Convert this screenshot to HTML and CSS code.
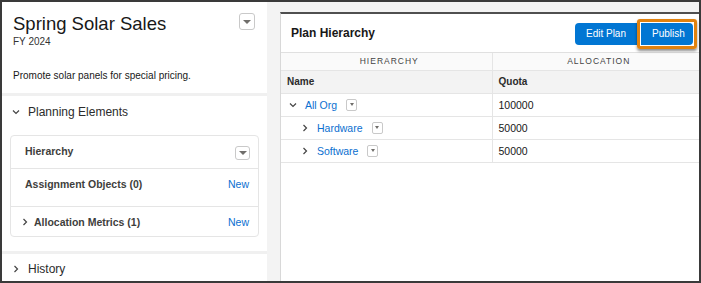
FILE: index.html
```html
<!DOCTYPE html>
<html lang="en">
<head>
    <meta charset="UTF-8">
    <title>Spring Solar Sales</title>
    <link rel="stylesheet" href="styles.css">
</head>
<body>
    <div class="frame">
        <aside class="plan-panel">
            <div class="plan-head">
                <div>
                    <h1>Spring Solar Sales</h1>
                    <div class="plan-year">FY 2024</div>
                </div>
                <button class="menu-btn"><span class="caret"></span></button>
            </div>
            <p class="plan-desc">Promote solar panels for special pricing.</p>

            <section class="section">
                <div class="section-title">
                    <svg class="chev" width="8" height="8" viewBox="0 0 8 8"><polyline points="1,2.5 4,5.5 7,2.5" /></svg>
                    Planning Elements
                </div>
                <div class="elements">
                    <div class="element-row row-hier">
                        <span>Hierarchy</span>
                        <button class="menu-btn small"><span class="caret"></span></button>
                    </div>
                    <div class="element-row row-assign">
                        <span>Assignment Objects (0)</span>
                        <a class="link">New</a>
                    </div>
                    <div class="element-row row-alloc">
                        <span class="with-chev">
                            <svg class="chev" width="8" height="8" viewBox="0 0 8 8"><polyline points="2.5,1 5.5,4 2.5,7" /></svg>
                            Allocation Metrics (1)
                        </span>
                        <a class="link">New</a>
                    </div>
                </div>
            </section>

            <section class="section history">
                <div class="section-title">
                    <svg class="chev" width="8" height="8" viewBox="0 0 8 8"><polyline points="2.5,1 5.5,4 2.5,7" /></svg>
                    History
                </div>
            </section>
        </aside>

        <main class="main-area">
            <div class="card">
                <div class="card-head">
                    <h2>Plan Hierarchy</h2>
                    <div class="btn-group">
                        <button class="btn">Edit Plan</button>
                        <span class="highlight"><button class="btn">Publish</button></span>
                    </div>
                </div>
                <table class="grid">
                    <tr class="group-row">
                        <th class="col-name">Hierarchy</th>
                        <th>Allocation</th>
                    </tr>
                    <tr class="head-row">
                        <th class="col-name">Name</th>
                        <th>Quota</th>
                    </tr>
                    <tr>
                        <td class="col-name">
                            <span class="node lvl0">
                                <svg class="chev" width="8" height="8" viewBox="0 0 8 8"><polyline points="1,2.5 4,5.5 7,2.5" /></svg>
                                <a class="link">All Org</a>
                                <button class="menu-btn tiny"><span class="caret"></span></button>
                            </span>
                        </td>
                        <td>100000</td>
                    </tr>
                    <tr>
                        <td class="col-name">
                            <span class="node lvl1">
                                <svg class="chev" width="8" height="8" viewBox="0 0 8 8"><polyline points="2.5,1 5.5,4 2.5,7" /></svg>
                                <a class="link">Hardware</a>
                                <button class="menu-btn tiny"><span class="caret"></span></button>
                            </span>
                        </td>
                        <td>50000</td>
                    </tr>
                    <tr>
                        <td class="col-name">
                            <span class="node lvl1">
                                <svg class="chev" width="8" height="8" viewBox="0 0 8 8"><polyline points="2.5,1 5.5,4 2.5,7" /></svg>
                                <a class="link">Software</a>
                                <button class="menu-btn tiny"><span class="caret"></span></button>
                            </span>
                        </td>
                        <td>50000</td>
                    </tr>
                </table>
            </div>
        </main>
    </div>
</body>
</html>
```

FILE: styles.css
```css
* {
    box-sizing: border-box;
}

body {
    margin: 0;
    font-family: "Liberation Sans", Arial, sans-serif;
    color: #181818;
}

.frame {
    width: 701px;
    height: 283px;
    display: flex;
    border: 2px solid #3a3a3a;
    background: #f3f3f3;
    overflow: hidden;
}

/* left panel */

.plan-panel {
    width: 265px;
    flex-shrink: 0;
    background: white;
}

.plan-head {
    display: flex;
    justify-content: space-between;
    align-items: flex-start;
    padding: 11px 12px 0 11px;
}

.plan-head h1 {
    margin: 0;
    font-size: 18.5px;
    font-weight: normal;
    line-height: 22px;
}

.plan-year {
    font-size: 10px;
    line-height: 14px;
    color: #333;
}

.plan-desc {
    margin: 0;
    padding: 20px 11px 10px;
    font-size: 10px;
    line-height: 14px;
}

.section {
    border-top: 3px solid #f0f0f0;
    padding: 0 8px 14px 8px;
}

.section-title {
    display: flex;
    align-items: center;
    gap: 8px;
    height: 30px;
    padding: 1px 0 0 2px;
    font-size: 12px;
    color: #2b2b2b;
}

.chev {
    fill: none;
    stroke: #444;
    stroke-width: 1.2;
    flex-shrink: 0;
}

.elements {
    margin-top: 9px;
    border: 1px solid #e5e5e5;
    border-radius: 4px;
}

.element-row {
    display: flex;
    justify-content: space-between;
    font-size: 10.5px;
    font-weight: bold;
    color: #3e3e3c;
    padding: 0 9px 0 14px;
    border-bottom: 1px solid #e5e5e5;
}

.element-row:last-child {
    border-bottom: none;
}

.row-hier {
    height: 33px;
    padding-top: 9px;
    padding-right: 8px;
}

.row-hier .menu-btn {
    margin-top: 1px;
}

.row-assign {
    height: 38px;
    padding-top: 9px;
}

.row-alloc {
    height: 29px;
    align-items: center;
    padding-left: 10px;
}

.with-chev {
    display: flex;
    align-items: center;
    gap: 5px;
}

.link {
    color: #0b6fd0;
    font-weight: normal;
    text-decoration: none;
}

.history {
    padding-top: 0;
}

.history .section-title {
    height: 29px;
}

.menu-btn {
    width: 16px;
    height: 17px;
    padding: 0;
    border: 1px solid #c9c9c9;
    border-radius: 3px;
    background: white;
    display: flex;
    align-items: center;
    justify-content: center;
}

.menu-btn.small {
    width: 15px;
    height: 14px;
}

.menu-btn.tiny {
    width: 11px;
    height: 12px;
    border-radius: 2px;
}

.caret {
    width: 0;
    height: 0;
    border-left: 4px solid transparent;
    border-right: 4px solid transparent;
    border-top: 4px solid #706e6b;
}

.tiny .caret {
    border-width: 3px 2.5px 0;
}

/* right card */

.main-area {
    flex: 1;
    padding: 10px 0 0 13px;
}

.card {
    height: 100%;
    background: white;
    border-left: 1px solid #d8d8d8;
    border-top: 2px solid #4f4f4f;
}

.card-head {
    display: flex;
    align-items: center;
    justify-content: space-between;
    height: 39px;
    padding: 0 2px 0 10px;
    border-bottom: 1px solid #e0e0e0;
}

.card-head h2 {
    margin: 0;
    font-size: 12px;
    font-weight: bold;
}

.btn-group {
    display: flex;
    align-items: center;
    margin-top: 1px;
}

.btn {
    height: 22px;
    padding: 0 11px;
    border: none;
    border-radius: 4px 0 0 4px;
    background: #0176d3;
    color: white;
    font-family: inherit;
    font-size: 10px;
}

.highlight {
    display: flex;
    padding: 1px;
    border: 3px solid #e1820f;
    border-radius: 3px;
    box-shadow: 0 2px 3px rgba(0,0,0,0.45);
}

.highlight .btn {
    width: 52px;
    border-radius: 0 4px 4px 0;
}

.grid {
    width: 100%;
    border-collapse: collapse;
    font-size: 10.5px;
}

.grid th,
.grid td {
    text-align: left;
    padding: 0 0 0 6px;
    border-bottom: 1px solid #e5e5e5;
}

.col-name {
    width: 211px;
    border-right: 1px solid #e5e5e5;
}

.group-row th {
    height: 17px;
    text-align: center;
    font-size: 8.5px;
    font-weight: normal;
    letter-spacing: 1px;
    text-transform: uppercase;
    color: #444;
    background: #fafafa;
}

.head-row th {
    height: 23px;
    font-size: 10px;
    background: #f3f3f3;
    color: #2b2b2b;
}

.grid td {
    height: 23px;
}

.node {
    display: flex;
    align-items: center;
}

.node .chev {
    margin-right: 8px;
}

.node .link {
    margin-right: 9px;
}

.lvl0 {
    padding-left: 2px;
}

.lvl1 {
    padding-left: 14px;
}
```
